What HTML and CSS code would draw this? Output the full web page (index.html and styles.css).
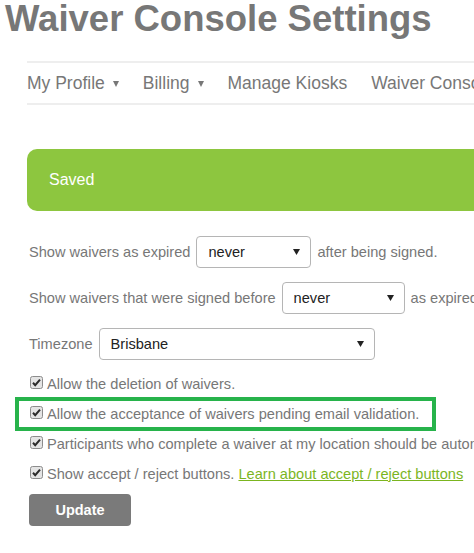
FILE: index.html
```html
<!DOCTYPE html>
<html lang="en">
<head>
<meta charset="utf-8">
<title>Waiver Console Settings</title>
<link rel="stylesheet" href="styles.css">
</head>
<body>
<div class="page">
  <h1 class="title">Waiver Console Settings</h1>
  <nav class="tabs">
    <span class="tab">My Profile<svg class="caret" width="6" height="6" viewBox="0 0 6 6"><path d="M0 0H6L3 6Z"/></svg></span>
    <span class="tab">Billing<svg class="caret" width="6" height="6" viewBox="0 0 6 6"><path d="M0 0H6L3 6Z"/></svg></span>
    <span class="tab">Manage Kiosks</span>
    <span class="tab">Waiver Console Settings</span>
  </nav>
  <div class="alert">Saved</div>
  <form class="form">
    <div class="field">
      <span>Show waivers as expired</span>
      <span class="select w115"><span>never</span><svg class="arrow" width="7" height="6" viewBox="0 0 7 6"><path d="M0 0H7L3.5 6Z"/></svg></span>
      <span>after being signed.</span>
    </div>
    <div class="field">
      <span>Show waivers that were signed before</span>
      <span class="select w123"><span>never</span><svg class="arrow" width="7" height="6" viewBox="0 0 7 6"><path d="M0 0H7L3.5 6Z"/></svg></span>
      <span>as expired.</span>
    </div>
    <div class="field">
      <span>Timezone</span>
      <span class="select w276"><span>Brisbane</span><svg class="arrow" width="7" height="6" viewBox="0 0 7 6"><path d="M0 0H7L3.5 6Z"/></svg></span>
    </div>
    <div class="checks">
      <label class="check"><svg class="box" width="13" height="13" viewBox="0 0 13 13"><rect x="0.5" y="0.5" width="12" height="12" rx="2" fill="#e4e4e4" stroke="#8c8c8c"/><path d="M3 6.8L5.2 9.2L10 3.6" fill="none" stroke="#2b2b2b" stroke-width="2"/></svg><span>Allow the deletion of waivers.</span></label>
      <label class="check marked"><svg class="box" width="13" height="13" viewBox="0 0 13 13"><rect x="0.5" y="0.5" width="12" height="12" rx="2" fill="#e4e4e4" stroke="#8c8c8c"/><path d="M3 6.8L5.2 9.2L10 3.6" fill="none" stroke="#2b2b2b" stroke-width="2"/></svg><span>Allow the acceptance of waivers pending email validation.</span></label>
      <label class="check"><svg class="box" width="13" height="13" viewBox="0 0 13 13"><rect x="0.5" y="0.5" width="12" height="12" rx="2" fill="#e4e4e4" stroke="#8c8c8c"/><path d="M3 6.8L5.2 9.2L10 3.6" fill="none" stroke="#2b2b2b" stroke-width="2"/></svg><span>Participants who complete a waiver at my location should be automatically checked in.</span></label>
      <label class="check"><svg class="box" width="13" height="13" viewBox="0 0 13 13"><rect x="0.5" y="0.5" width="12" height="12" rx="2" fill="#e4e4e4" stroke="#8c8c8c"/><path d="M3 6.8L5.2 9.2L10 3.6" fill="none" stroke="#2b2b2b" stroke-width="2"/></svg><span>Show accept / reject buttons. <a class="link" href="#">Learn about accept / reject buttons</a></span></label>
    </div>
    <button class="btn" type="button">Update</button>
  </form>
</div>
</body>
</html>
```
FILE: styles.css
```css
html, body {
  margin: 0;
  padding: 0;
  background: #fff;
  overflow: hidden;
}
body {
  font-family: "Liberation Sans", Arial, sans-serif;
  color: #777;
}
.page {
  width: 800px;
}
.title {
  margin: 0;
  padding: 1px 0 0 5px;
  font-size: 36.5px;
  line-height: 36px;
  font-weight: bold;
  color: #777;
  white-space: nowrap;
}
.tabs {
  margin: 24px 0 0 27px;
  border-top: 2px solid #eee;
  border-bottom: 2px solid #eee;
  display: flex;
  gap: 24px;
  font-size: 17.5px;
  line-height: 40px;
  white-space: nowrap;
  color: #777;
}
.tab {
  display: flex;
  align-items: center;
}
.caret {
  margin-left: 8px;
  fill: #777;
  position: relative;
  top: 1px;
}
.alert {
  margin: 44px 0 0 27px;
  height: 62px;
  line-height: 62px;
  padding-left: 22px;
  border-radius: 10px;
  background: #8dc63f;
  color: #fff;
  font-size: 16px;
}
.form {
  margin: 25px 0 0 29px;
  font-size: 14.6px;
}
.field {
  display: flex;
  align-items: center;
  gap: 6px;
  height: 32px;
  margin-bottom: 14px;
  white-space: nowrap;
}
.select {
  box-sizing: border-box;
  height: 32px;
  border: 1px solid #b5b5b5;
  border-radius: 4px;
  display: flex;
  align-items: center;
  justify-content: space-between;
  padding: 0 10px 0 11px;
  color: #222;
  background: #fff;
}
.w115 { width: 115px; }
.w123 { width: 123px; }
.w276 { width: 276px; }
.arrow {
  fill: #222;
}
.checks {
  margin-top: -5px;
}
.check {
  position: relative;
  display: flex;
  align-items: center;
  height: 29.9px;
  white-space: nowrap;
}
.box {
  margin-left: 1px;
  margin-right: 4px;
  flex: none;
  position: relative;
  top: -1px;
}
.marked::after {
  content: "";
  position: absolute;
  left: -14px;
  top: -2px;
  width: 421px;
  height: 34px;
  box-sizing: border-box;
  border: 4px solid #27b34b;
}
.link {
  color: #7bb51f;
  text-decoration: underline;
}
.btn {
  margin-top: 5px;
  width: 102px;
  height: 32px;
  border: 0;
  border-radius: 4px;
  background: #7a7a7a;
  color: #fff;
  font-family: "Liberation Sans", Arial, sans-serif;
  font-size: 14.5px;
  font-weight: bold;
  padding: 0;
}
```
